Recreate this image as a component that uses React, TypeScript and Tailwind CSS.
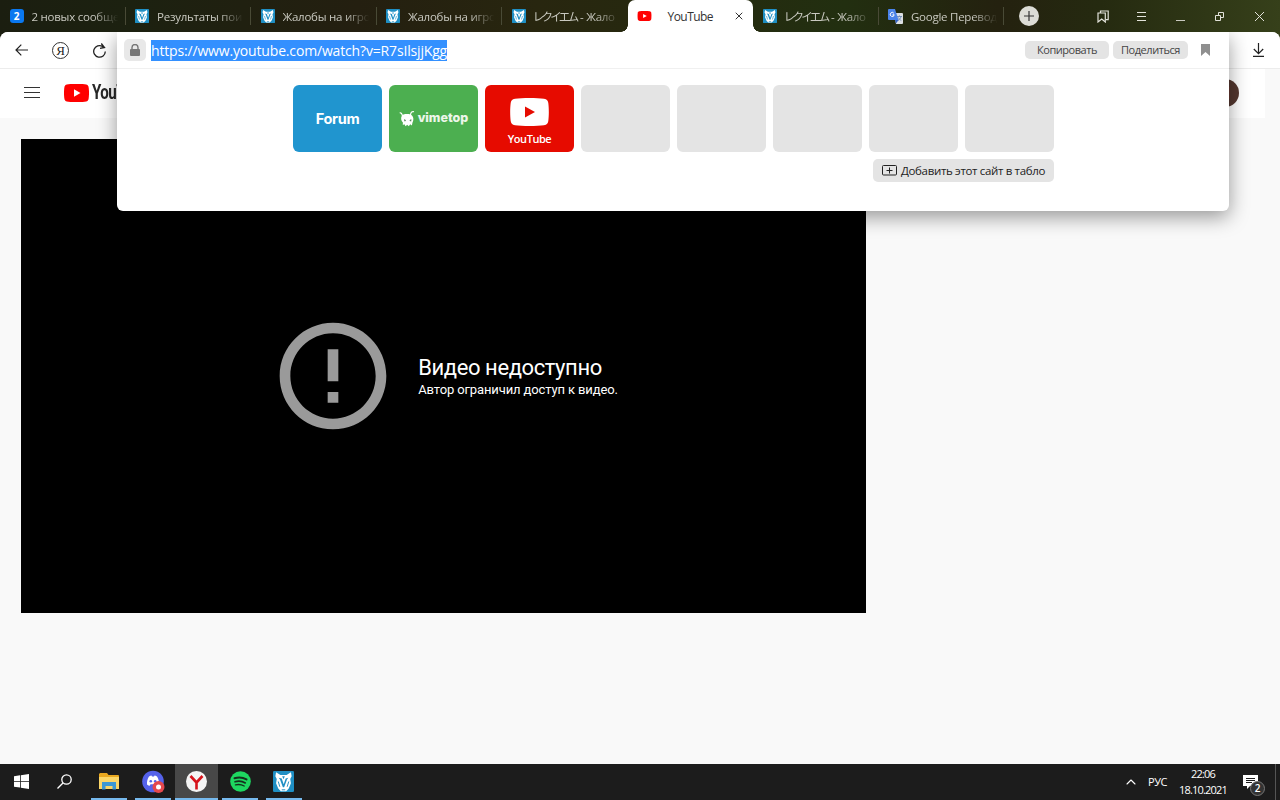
import { ChevronUp, X } from 'lucide-react';

type TabIcon = 'mail' | 'vime' | 'youtube' | 'translate';

interface Tab {
  title: string;
  jp?: string;
  icon: TabIcon;
  active?: boolean;
  divider?: boolean;
}

const tabs: Tab[] = [
  { title: '2 новых сообще', icon: 'mail', divider: true },
  { title: 'Результаты пои', icon: 'vime', divider: true },
  { title: 'Жалобы на игро', icon: 'vime', divider: true },
  { title: 'Жалобы на игро', icon: 'vime', divider: true },
  { jp: 'レクイエム', title: ' - Жало', icon: 'vime' },
  { title: 'YouTube', icon: 'youtube', active: true },
  { jp: 'レクイエム', title: ' - Жало', icon: 'vime', divider: true },
  { title: 'Google Перевод', icon: 'translate', divider: true },
];

function VimeLogo({ className }: { className: string }) {
  return (
    <svg className={className} viewBox="0 0 24 24">
      <rect width="24" height="24" rx="1.5" fill="#1f8fc4" />
      <path
        fill="#fff"
        d="M3.500 1.500 8.500 4.500h7l5-3 .8 4.500-1.600 3 .8 5-2.500 6-3 3h-6l-3-3-2.500-6 .8-5-1.600-3z"
      />
      <path fill="#1f8fc4" d="M6.500 7.800 10 8.500l2.200 6.500L14.500 8.500l3-.7-1.500 2-3.300 8.700h-1.400L8 9.800z" />
      <path fill="#1f8fc4" d="M10.500 6h3l-1.500 3.500z" />
      <path stroke="#1f8fc4" strokeWidth="1.100" d="m6 12 1.800 6M18 12l-1.800 6M10 21.500h4" />
    </svg>
  );
}

function YouTubeIcon({ className }: { className: string }) {
  return (
    <svg className={className} viewBox="0 0 25 18">
      <path
        fill="#f00"
        d="M12.500 0c5 0 8 .1 9.700.5 1.200.3 2 1.100 2.300 2.300.4 1.700.5 4 .5 6.200s-.1 4.500-.5 6.200c-.3 1.200-1.100 2-2.300 2.300-1.700.4-4.700.5-9.700.5s-8-.1-9.700-.5c-1.200-.3-2-1.100-2.300-2.300C.1 13.500 0 11.200 0 9s.1-4.500.5-6.200C.8 1.600 1.600.8 2.800.5 4.500.1 7.500 0 12.500 0z"
      />
      <path fill="#fff" d="m10 5.200 6.500 3.800-6.500 3.800z" />
    </svg>
  );
}

function TranslateIcon() {
  return (
    <svg className="h-[15px] w-[15px] shrink-0" viewBox="0 0 15 15">
      <path fill="#dcdfe3" d="M6 4h8a1 1 0 0 1 1 1v9a1 1 0 0 1-1 1H8z" />
      <path fill="none" stroke="#5f7fae" strokeWidth=".8" d="M9 7.500h5M11.500 6.500v1M13 7.500c-.5 2-1.500 3-3 4M10.500 8.500c.6 1.500 1.500 2.300 2.800 3" />
      <path fill="#4a83ea" d="M1 0h6l3.500 11H1a1 1 0 0 1-1-1V1a1 1 0 0 1 1-1z" />
      <path fill="#3261c4" d="M7 11h3.500L8 14.500z" />
      <path fill="none" stroke="#fff" d="M5.800 4.200A2 2 0 1 0 6.200 5.800H4.500" />
    </svg>
  );
}

function FavIcon({ icon }: { icon: TabIcon }) {
  if (icon === 'mail') {
    return (
      <span className="flex h-[14px] w-[14px] shrink-0 items-center justify-center rounded-[3px] bg-[#0a78f0] text-[10px] font-bold text-white">
        2
      </span>
    );
  }
  if (icon === 'vime') return <VimeLogo className="h-[14px] w-[14px] shrink-0" />;
  if (icon === 'youtube') return <YouTubeIcon className="h-[10px] w-[15px] shrink-0" />;
  return <TranslateIcon />;
}

function BrowserTab({ tab }: { tab: Tab }) {
  if (tab.active) {
    return (
      <div className="relative flex w-[125.500px] shrink-0 items-center rounded-t-[7px] bg-white pl-[9px] text-[#333]">
        <span className="absolute bottom-0 -left-[7px] h-[7px] w-[7px] bg-[radial-gradient(circle_at_0_0,transparent_6.500px,white_7px)]" />
        <span className="absolute -right-[7px] bottom-0 h-[7px] w-[7px] bg-[radial-gradient(circle_at_100%_0,transparent_6.500px,white_7px)]" />
        <FavIcon icon={tab.icon} />
        <span className="mt-px ml-[16px] w-[60px] text-[12px] tracking-[-0.550px]">{tab.title}</span>
        <X className="ml-[5px] h-[12px] w-[12px]" strokeWidth={2} />
      </div>
    );
  }

  return (
    <div className="flex w-[125.500px] shrink-0 items-center pl-[9.500px] text-[#c9c9c0]">
      <FavIcon icon={tab.icon} />
      <span className="mt-px ml-[8px] w-[88px] text-[11.500px] tracking-[-0.250px] whitespace-pre [mask-image:linear-gradient(to_right,black_70%,transparent_98%)]">
        {tab.jp && <span className="tracking-[-1.700px] [font-feature-settings:'palt']">{tab.jp}</span>}
        {tab.title}
      </span>
      {tab.divider && <span className="ml-auto h-[18px] w-px bg-[#494a36]" />}
    </div>
  );
}

function TabStrip() {
  return (
    <div className="flex h-8 bg-[linear-gradient(90deg,#1b1e10_0%,#1c2110_10%,#241f10_28%,#28260f_42%,#26290f_52%,#222f10_66%,#24210f_78%,#252a10_86%,#36401a_100%)]">
      {tabs.map((tab, i) => (
        <BrowserTab key={i} tab={tab} />
      ))}
      <div className="flex flex-1 items-center text-[#e2e2da]">
        <svg className="ml-[15px] h-5 w-5" viewBox="0 0 20 20">
          <circle cx="10" cy="10" r="10" fill="#dcdcd6" />
          <path stroke="#333" strokeWidth="1.200" d="M10 5v10M5 10h10" />
        </svg>
        <svg className="ml-[58px] h-[13px] w-[12px]" viewBox="0 0 12 13" fill="none" stroke="currentColor" strokeWidth="1.200">
          <path d="M3.500 3V1h7.700v8.700H9" />
          <path d="M1 3h7.300v9L4.700 9 1 12z" />
        </svg>
        <svg className="ml-[28px] h-[9px] w-[9px]" viewBox="0 0 9 9" stroke="currentColor">
          <path d="M0 .5h9M0 4.500h9M0 8.500h9" />
        </svg>
        <span className="mt-[9px] ml-[30px] h-px w-[9px] bg-[#c9c9c0]" />
        <svg className="ml-[30px] h-[9px] w-[9px]" viewBox="0 0 9 9" fill="none" stroke="currentColor">
          <path d="M.5 3.500h5v5h-5zM3.500 3.500v-3h5v5h-3" />
        </svg>
        <svg className="ml-[31px] h-[9px] w-[9px]" viewBox="0 0 9 9" stroke="currentColor">
          <path d="m0 0 9 9M9 0 0 9" />
        </svg>
      </div>
    </div>
  );
}

function Toolbar() {
  return (
    <div className="flex h-[37px] items-center border-b border-[#ececec] bg-white text-[#222]">
      <svg className="ml-[15px] h-[12px] w-[13px]" viewBox="0 0 13 12" fill="none" stroke="currentColor" strokeWidth="1.200">
        <path d="M13 6H1M6.300.7 1 6l5.300 5.300" />
      </svg>
      <span className="ml-[24px] flex h-[17px] w-[17px] items-center justify-center rounded-full border border-[#333] font-['Liberation_Serif'] text-[13px] leading-none">
        Я
      </span>
      <svg className="ml-[24px] h-[15px] w-[13px]" viewBox="0 0 13 15" fill="none" stroke="currentColor" strokeWidth="1.300">
        <path d="M12.300 8.500A5.800 5.800 0 1 1 9.500 3.400L11.500 4.500M8.300.5l3.200 4-4.500.8" />
      </svg>
      <svg className="mr-[16px] ml-auto h-[14px] w-[11px]" viewBox="0 0 11 14" fill="none" stroke="currentColor" strokeWidth="1.200">
        <path d="M5.500 0v10.500M.8 6l4.700 4.700L10.200 6M0 13.300h11" />
      </svg>
    </div>
  );
}

function Masthead() {
  return (
    <div className="mr-[15px] flex h-[49px] items-center bg-white">
      <svg className="-mt-[3px] ml-[24px] h-[13px] w-4" viewBox="0 0 16 13" stroke="#333">
        <path d="M0 1.500h16M0 6.500h16M0 11.500h16" />
      </svg>
      <YouTubeIcon className="-mt-[2px] ml-[24px] h-[18px] w-[25px]" />
      <span className="-mt-[2px] ml-[3px] origin-left scale-x-[.72] font-['Roboto'] text-[21px] font-bold tracking-[-0.8px] text-[#282828]">
        YouTube
      </span>
      <span className="-mt-[2px] mr-[26px] ml-auto flex h-7 w-7 items-center justify-center rounded-full bg-[#54372f] text-[16px] text-white">
        Я
      </span>
    </div>
  );
}

function VimeTopMascot() {
  return (
    <svg className="h-[17px] w-4" viewBox="0 0 16 17">
      <path fill="none" stroke="#fff" strokeWidth="1.200" d="M3.500 6C3 3.500 2 2.500.7 3M11.500 5c.2-2.500 1.500-4 3.500-3.300" />
      <path
        fill="#fff"
        d="M3 5.500C5 3.800 10.500 3.500 13 5.500c1.700 1.500 1.800 5 .5 7l-.6 3-1.700-1.300-1.400 2-1.600-1.400-1.600 1.400-1.200-2-1.600.8.100-2.500C2 11 1.500 7.500 3 5.500z"
      />
      <path fill="#5d8a60" d="M5.200 9 7 10.200l-.6 1H5.200zM12.300 9l-1.800 1.200.6 1h1.200z" />
    </svg>
  );
}

function Tiles() {
  return (
    <div className="flex gap-[7px]">
      <div className="flex h-[67px] w-[89px] shrink-0 items-center justify-center rounded-[6px] bg-[#2095cf] font-['Inter'] text-[14.500px] font-bold tracking-[-0.3px] text-white">
        Forum
      </div>
      <div className="flex h-[67px] w-[89px] shrink-0 items-center justify-center gap-[3px] rounded-[6px] bg-[#4caf50] font-['Inter'] text-[12.500px] font-extrabold text-[#edf6ea]">
        <VimeTopMascot />
        vimetop
      </div>
      <div className="flex h-[67px] w-[89px] shrink-0 flex-col items-center rounded-[6px] bg-[#e60b00] pt-[13px] text-[11px] font-semibold text-white">
        <svg className="h-7 w-[39px]" viewBox="0 0 39 28">
          <path fill="#fff" d="M5 .8C12-.2 27-.2 34 .8c3 .5 4 2 4.300 4.200.7 5 .7 13 0 18-.3 2.200-1.300 3.700-4.300 4.200-7 1-22 1-29 0C2 26.700 1 25.200.700 23 0 18 0 10 .7 5 1 2.800 2 1.300 5 .8z" />
          <path fill="#e60b00" d="m15 8.500 10 5.500-10 5.500z" />
        </svg>
        <span className="mt-[5px] leading-[15px] tracking-[-0.450px]">YouTube</span>
      </div>
      {[0, 1, 2, 3, 4].map((i) => (
        <div key={i} className="h-[67px] w-[89px] shrink-0 rounded-[6px] bg-[#e4e4e4]" />
      ))}
    </div>
  );
}

function AddressPanel() {
  return (
    <div className="absolute top-0 left-[117px] h-[179px] w-[1112px] rounded-b-[6px] bg-white shadow-[0_6px_20px_rgba(0,0,0,0.4)]">
      <div className="flex h-9 items-center pl-[7px]">
        <span className="flex h-[22px] w-[22px] items-center justify-center rounded-[5px] bg-[#e8e8e8]">
          <svg className="h-[12px] w-[10px]" viewBox="0 0 10 12">
            <rect y="5" width="10" height="7" rx="1" fill="#777" />
            <path fill="none" stroke="#777" strokeWidth="1.400" d="M2 5.500V3.500a3 3 0 0 1 6 0v2" />
          </svg>
        </span>
        <span className="ml-[5px] h-[21px] bg-[#3390ff] text-[14px] leading-[22px] tracking-[-0.165px] whitespace-nowrap text-white">
          https://www.youtube.com/watch?v=R7sIlsjjKgg
        </span>
        <button className="ml-auto h-[18px] w-[84px] rounded-[5px] bg-[#e4e4e4] text-[11px] leading-[18px] tracking-[-0.450px] text-[#444]">
          Копировать
        </button>
        <button className="ml-1 h-[18px] w-[75px] rounded-[5px] bg-[#e4e4e4] text-[11px] leading-[18px] tracking-[-0.450px] text-[#444]">
          Поделиться
        </button>
        <svg className="mr-[19px] ml-[13px] h-[12px] w-[9px]" viewBox="0 0 9 12">
          <path fill="#8f8f8f" d="M0 0h9v12L4.500 8 0 12z" />
        </svg>
      </div>
      <div className="flex flex-col border-t border-[#f0f0f0] px-[175px] pl-[176px] pt-[16px]">
        <Tiles />
        <button className="mt-[7px] flex h-[23px] w-[181px] items-center gap-1 self-end rounded-[5px] bg-[#e4e4e4] pl-[9px] text-[11.500px] tracking-[-0.340px] whitespace-nowrap text-[#222]">
          <svg className="h-[11px] w-[15px] shrink-0" viewBox="0 0 15 11" fill="none" stroke="currentColor">
            <rect x=".5" y=".5" width="14" height="9.500" rx="1" />
            <path d="M7.500 2.500v6M4.500 5.500h6" />
          </svg>
          Добавить этот сайт в табло
        </button>
      </div>
    </div>
  );
}

function VideoError() {
  return (
    <div className="mt-[21px] ml-[21px] flex h-[474px] w-[845px] items-center justify-center gap-[21px] bg-black font-['Roboto'] text-white">
      <svg className="h-32 w-32" viewBox="0 0 24 24" fill="#9a9a9a">
        <path d="M12 4c4.410 0 8 3.590 8 8s-3.590 8-8 8-8-3.590-8-8 3.590-8 8-8m0-2C6.480 2 2 6.480 2 12s4.480 10 10 10 10-4.480 10-10S17.520 2 12 2zm-1 5h2v6h-2zm0 8h2v2h-2z" />
      </svg>
      <div>
        <div className="text-[22px] leading-[26px] tracking-[-0.400px]">Видео недоступно</div>
        <div className="text-[13px] leading-[17px] tracking-[-0.120px]">Автор ограничил доступ к видео.</div>
      </div>
    </div>
  );
}

interface AppSlotProps {
  children: React.ReactNode;
  running?: boolean;
  active?: boolean;
}

function AppSlot({ children, running, active }: AppSlotProps) {
  return (
    <div className={`flex h-full w-[43.700px] flex-col items-center ${active ? 'bg-[#484848]' : ''}`}>
      <div className="flex flex-1 items-center">{children}</div>
      <div className={`h-[2px] ${active ? 'w-full' : 'w-[36px]'} ${running ? 'bg-[#76b9ed]' : ''}`} />
    </div>
  );
}

function Taskbar() {
  return (
    <div className="flex h-9 bg-[#1c1c1c] text-white">
      <AppSlot>
        <svg className="h-[15px] w-[15px]" viewBox="0 0 15 15" fill="#fff">
          <path d="M0 2.200 6 1.300V7H0zM6.800 1.200 15 0v7H6.800zM0 7.800h6v5.800l-6-.9zM6.800 7.800H15V15l-8.200-1.200z" />
        </svg>
      </AppSlot>
      <AppSlot>
        <svg className="mr-[3px] h-[15px] w-[15px]" viewBox="0 0 15 15" fill="none" stroke="#fff" strokeWidth="1.300">
          <circle cx="9.500" cy="5.500" r="4.700" />
          <path d="M6.200 8.800.5 14.500" />
        </svg>
      </AppSlot>
      <AppSlot running>
        <svg className="h-[17px] w-5" viewBox="0 0 20 17">
          <path fill="#e9a820" d="M1 0h7l1.500 2H19a1 1 0 0 1 1 1v4H0V1z" />
          <path fill="#fbd668" d="M0 4h20v12H0z" />
          <path fill="#3d98d4" d="M3 9h14v7.500h-3.500V13h-7v3.500H3z" />
        </svg>
      </AppSlot>
      <AppSlot running>
        <svg className="-mr-px h-[23px] w-[23px]" viewBox="0 0 23 23">
          <circle cx="11" cy="11.500" r="10.800" fill="#5562ea" />
          <path fill="#fff" d="M7 6.500c1-.6 1.800-.8 2.500-.9l.5 1h2l.5-1c.8.1 1.600.3 2.500.9 1.500 2.200 2.200 5 2 8-1 .8-2 1.200-2.700 1.300l-.8-1.500h-5l-.8 1.500C7 15.700 6 15.300 5 14.500c-.2-3 .5-5.800 2-8z" />
          <circle cx="8.800" cy="11.200" r="1.300" fill="#5562ea" />
          <circle cx="13.200" cy="11.200" r="1.300" fill="#5562ea" />
          <circle cx="16.500" cy="17" r="6" fill="#e5484d" />
          <circle cx="16.500" cy="17" r="2.500" fill="#fff" />
        </svg>
      </AppSlot>
      <AppSlot running active>
        <svg className="h-[21px] w-[21px]" viewBox="0 0 21 21">
          <circle cx="10.500" cy="10.500" r="10.500" fill="#f4f4f4" />
          <path fill="none" stroke="#d6131b" strokeWidth="2.600" d="M4.500 5 10.500 11.500 16.500 5M10.500 11v7.500" />
        </svg>
      </AppSlot>
      <AppSlot running>
        <svg className="h-[21px] w-[21px]" viewBox="0 0 21 21" fill="none" stroke="#15301d" strokeLinecap="round">
          <circle cx="10.500" cy="10.500" r="10.300" fill="#1ed760" stroke="none" />
          <path strokeWidth="2" d="M4.500 7.200c4-1.200 8.500-.8 12 1.200" />
          <path strokeWidth="1.700" d="M5 10.700c3.500-1 7.300-.6 10.300 1.200" />
          <path strokeWidth="1.400" d="M5.500 13.900c3-.8 6-.4 8.700 1.100" />
        </svg>
      </AppSlot>
      <AppSlot running>
        <VimeLogo className="h-[21px] w-[21px]" />
      </AppSlot>

      <div className="ml-auto flex items-center text-[11px]">
        <ChevronUp className="h-[16px] w-[16px]" strokeWidth={1.600} />
        <span className="ml-[9px] w-[20px] tracking-[-0.4px]">РУС</span>
        <div className="ml-[10px] w-[50px] text-center leading-4 tracking-[-0.800px] whitespace-nowrap">
          <div>22:06</div>
          <div>18.10.2021</div>
        </div>
        <div className="relative ml-[15px] h-[14px] w-[15px]">
          <svg className="h-[14px] w-[15px]" viewBox="0 0 15 14">
            <path fill="#fff" d="M0 0h15v11H7l-3 3v-3H0z" />
            <path stroke="#1c1c1c" d="M3 3.500h9M3 5.500h9M3 7.500h6" />
          </svg>
          <span className="absolute top-[6px] left-[7px] flex h-[15px] w-[15px] items-center justify-center rounded-full border border-[#777] bg-[#333] text-[10px] font-semibold">
            2
          </span>
        </div>
        <div className="ml-[17px] h-full w-[5px] border-l border-[#555]" />
      </div>
    </div>
  );
}

export default function App() {
  return (
    <div className="flex h-[800px] w-[1280px] flex-col overflow-hidden bg-[#f9f9f9] font-['Open_Sans','Noto_Sans_CJK_JP',sans-serif]">
      <TabStrip />
      <div className="bg-[linear-gradient(90deg,#1b1e10_50%,#36401a_50%)]">
        <div className="relative h-[732px] overflow-hidden rounded-t-[8px] bg-[#f9f9f9]">
          <Toolbar />
          <Masthead />
          <VideoError />
          <AddressPanel />
        </div>
      </div>
      <Taskbar />
    </div>
  );
}
